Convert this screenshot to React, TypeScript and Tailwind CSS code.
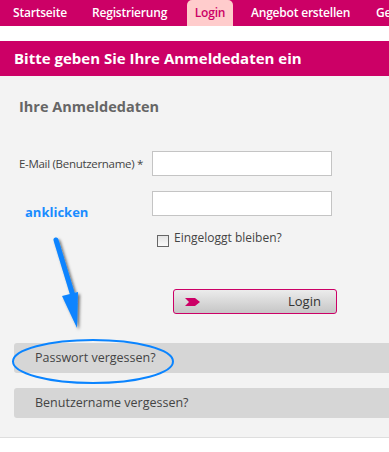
import React from "react";

const font = { fontFamily: '"Open Sans", "Noto Sans", sans-serif' };

function NavBar() {
  return (
    <nav className="flex h-[26px] items-end bg-[#cc0066] text-[12px] font-semibold tracking-[-0.2px] text-white whitespace-nowrap overflow-hidden">
      <span className="w-[80px] shrink-0 pl-[13px] leading-[26px]">Startseite</span>
      <span className="w-[107px] shrink-0 pl-[12px] leading-[26px]">Registrierung</span>
      <span className="h-[26px] w-[46px] shrink-0 rounded-t-[5px] bg-[#ffcccc] text-center leading-[26px] text-[#cc0066]">Login</span>
      <span className="w-[143px] shrink-0 pl-[18px] leading-[26px]">Angebot erstellen</span>
      <span className="shrink-0 leading-[26px]">Gebote</span>
    </nav>
  );
}

function Arrow() {
  return (
    <svg className="absolute left-[45px] top-[232px]" width="50" height="105" viewBox="0 0 50 105">
      <defs>
        <filter id="sh" x="-50%" y="-20%" width="200%" height="150%">
          <feDropShadow dx="2" dy="2" stdDeviation="1.5" floodColor="#000" floodOpacity="0.55" />
        </filter>
      </defs>
      <g filter="url(#sh)">
        <path d="M11 8 L28 64" stroke="#0a84ff" strokeWidth="5" strokeLinecap="round" />
        <path d="M17 64 L33 60 L32 96 Z" fill="#0a84ff" />
      </g>
    </svg>
  );
}

function Ellipse() {
  return (
    <svg className="absolute left-[11px] top-[338px]" width="166" height="48" viewBox="0 0 166 48">
      <ellipse cx="82" cy="23.5" rx="80" ry="21.5" fill="none" stroke="#0a84ff" strokeWidth="2" />
    </svg>
  );
}

export default function App() {
  return (
    <div className="relative w-[389px] h-[452px] overflow-hidden bg-white" style={font}>
      <NavBar />
      <div className="mt-[15px] h-[35px] bg-[#cc0066] pl-[14px] text-[15px] font-bold leading-[35px] text-white">
        Bitte geben Sie Ihre Anmeldedaten ein
      </div>
      <div className="border-b border-[#dedede] bg-[#f3f3f3] pb-[19px]">
        <h2 className="pl-[19px] pt-[21px] text-[14.5px] font-bold leading-[20px] text-[#666]">Ihre Anmeldedaten</h2>

        <div className="mt-[34px] flex items-center pl-[19px]">
          <label className="w-[133px] whitespace-nowrap text-[11.5px] tracking-[-0.3px] text-[#444]">E-Mail (Benutzername) *</label>
          <input className="h-[25px] w-[180px] border border-[#c4c4c4] bg-white" />
        </div>
        <div className="mt-[15px] flex items-center pl-[152px]">
          <input type="password" className="h-[25px] w-[180px] border border-[#c4c4c4] bg-white" />
        </div>

        <div className="mt-[18px] flex items-center pl-[157px]">
          <span className="h-[12px] w-[12px] border border-[#666] bg-gradient-to-b from-[#e4e4e4] to-[#fafafa]" />
          <span className="ml-[5px] text-[12px] leading-[14px] text-[#444] -translate-y-[3px]">Eingeloggt bleiben?</span>
        </div>

        <div className="mt-[41px] pl-[173px]">
          <button className="relative flex h-[25px] w-[164px] items-center rounded-[3px] border border-[#cc0066] bg-gradient-to-b from-[#ececec] to-[#c6c6c6] text-[13px] text-[#333]">
            <svg className="absolute left-[11px] top-[8px]" width="15" height="8" viewBox="0 0 15 8">
              <path d="M0 0 H10 L15 4 L10 8 H0 L4 4 Z" fill="#cc0066" />
            </svg>
            <span className="ml-[114px]">Login</span>
          </button>
        </div>

        <div className="mt-[29px] ml-[14px] flex h-[30px] items-center rounded-l-[3px] bg-[#d6d6d6] pl-[21px] text-[12.5px] text-[#444]">
          Passwort vergessen?
        </div>
        <div className="mt-[15px] ml-[14px] flex h-[30px] items-center rounded-l-[3px] bg-[#d6d6d6] pl-[21px] text-[12.5px] text-[#444]">
          Benutzername vergessen?
        </div>
      </div>

      <span className="absolute left-[25px] top-[203px] text-[13px] font-bold text-[#1a8cff]">anklicken</span>
      <Arrow />
      <Ellipse />
    </div>
  );
}
